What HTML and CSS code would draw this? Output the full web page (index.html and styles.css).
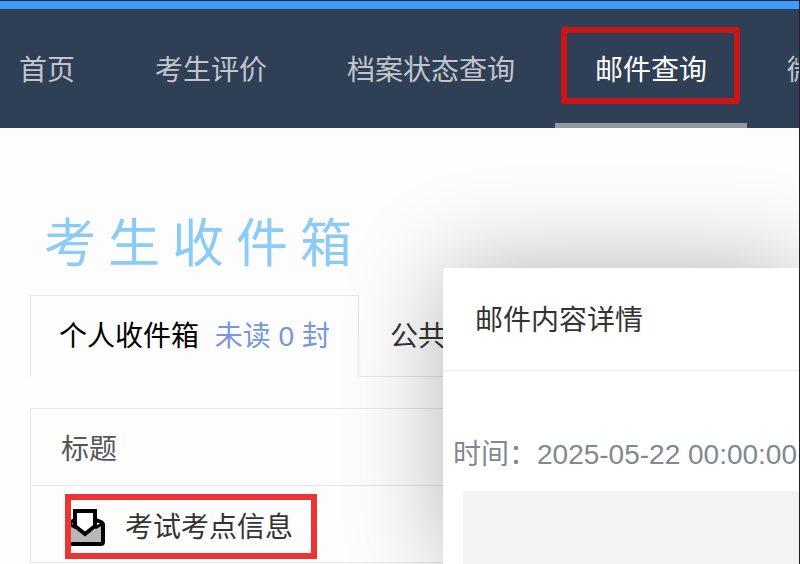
FILE: index.html
```html
<!DOCTYPE html>
<html lang="zh-CN">
<head>
    <meta charset="UTF-8">
    <meta name="viewport" content="width=device-width, initial-scale=1.0">
    <title>考生收件箱</title>
    <link rel="stylesheet" href="styles.css">
</head>
<body>
    <nav class="nav">
        <a class="nav-item" href="#">首页</a>
        <a class="nav-item" href="#">考生评价</a>
        <a class="nav-item" href="#">档案状态查询</a>
        <a class="nav-item active" href="#">邮件查询</a>
        <a class="nav-item" href="#">微信绑定</a>
    </nav>

    <main class="inbox">
        <h1 class="inbox-title">考生收件箱</h1>

        <div class="tabs">
            <button class="tab active" type="button">个人收件箱 <span class="unread">未读 0 封</span></button>
            <button class="tab" type="button">公共收件箱</button>
        </div>

        <table class="mail-table">
            <thead>
                <tr><th>标题</th></tr>
            </thead>
            <tbody>
                <tr>
                    <td>
                        <a class="mail-link" href="#">
                            <svg class="mail-icon" viewBox="0 0 41 41" aria-hidden="true">
                                <path d="M3 18 L20 28 L38 18 V37 H3 Z" fill="#b8b8b8"/>
                                <path d="M10 13 L4 16 V37 H36 Q38 37 38 35 V18 Q38 16 36 15 L31 13" fill="none" stroke="#000" stroke-width="4"/>
                                <path d="M10 4 H30 V19 L20 27 L10 19 Z" fill="#fff" stroke="#000" stroke-width="4"/>
                                <path d="M4 17 L11 21 M37 17 L30 21" stroke="#000" stroke-width="3"/>
                            </svg>
                            考试考点信息
                        </a>
                    </td>
                </tr>
            </tbody>
        </table>
    </main>

    <section class="dialog" role="dialog" aria-labelledby="dialog-title">
        <h2 class="dialog-title" id="dialog-title">邮件内容详情</h2>
        <p class="dialog-time">时间：2025-05-22 00:00:00</p>
        <div class="dialog-content"></div>
    </section>
</body>
</html>
```

FILE: styles.css
```css
* {
    box-sizing: border-box;
}
body {
    position: relative;
    min-height: 100vh;
    margin: 0;
    overflow: hidden;
    background-color: #fdfdfd;
    color: #333;
    font-family: "Liberation Sans", "Noto Sans CJK SC", sans-serif;
    font-size: 28px;
    line-height: 40px;
}
/* thin dark line down the right side of the window */
body::after {
    content: "";
    position: absolute;
    top: 0;
    right: 0;
    bottom: 0;
    z-index: 3;
    width: 1px;
    background-color: #222;
}
a {
    color: inherit;
    text-decoration: none;
}

/* top navigation */
.nav {
    display: flex;
    overflow: hidden;
    border-top: 1px solid #10294a;
    background-color: #2f4056;
    box-shadow: inset 0 8px #409bfa;
}
.nav-item {
    position: relative;
    flex: none;
    padding: 50px 40px 37px;
    color: #c1c6cc;
    white-space: nowrap;
}
.nav-item:first-child {
    padding-left: 19px;
}
.nav-item.active {
    border-bottom: 5px solid #9498a0;
    padding-bottom: 32px;
    color: #fff;
}
.nav-item.active::after {
    content: "";
    position: absolute;
    top: 26px;
    right: 7px;
    bottom: 19px;
    left: 6px;
    border: 6px solid #c91418;
    border-radius: 2px;
}

/* inbox */
.inbox {
    padding: 82px 0 0 30px;
}
.inbox-title {
    margin: 0 0 17px 14px;
    color: #8accf5;
    font-size: 52px;
    font-weight: normal;
    letter-spacing: 12px;
    line-height: 68px;
}
.tabs {
    display: flex;
    margin-bottom: 31px;
}
.tab {
    flex: none;
    padding: 21px 28px 19px;
    border: 1px solid transparent;
    border-bottom-color: #e6e6e6;
    background: none;
    color: #333;
    font: inherit;
    white-space: nowrap;
}
.tab:last-child {
    flex: 1 0 auto;
    padding-left: 30px;
    text-align: left;
}
.tab.active {
    border-color: #e6e6e6;
    border-bottom-color: transparent;
    color: #000;
}
.unread {
    margin-left: 8px;
    color: #7597dc;
}
.mail-table {
    width: 100%;
    border-collapse: collapse;
}
.mail-table th,
.mail-table td {
    height: 77px;
    padding: 6px 30px 0;
    border: 1px solid #e6e6e6;
    color: #555;
    font-weight: normal;
    text-align: left;
}
.mail-table td {
    color: #333;
}
.mail-link {
    position: relative;
    display: inline-flex;
    align-items: center;
    gap: 19px;
    padding-left: 4px;
    vertical-align: middle;
}
.mail-link::before {
    content: "";
    position: absolute;
    top: -13px;
    right: -24px;
    bottom: -11px;
    left: 4px;
    z-index: 1;
    border: 6px solid #ec3434;
}
.mail-icon {
    width: 41px;
    height: 41px;
}

/* mail detail dialog */
.dialog {
    position: absolute;
    top: 268px;
    right: 0;
    bottom: 0;
    left: 443px;
    z-index: 2;
    display: flex;
    flex-direction: column;
    border-radius: 4px 0 0 0;
    background-color: #fff;
    box-shadow: 2px 2px 100px rgba(0, 0, 0, 0.3);
}
.dialog-title {
    margin: 0;
    padding: 33px 32px 29px;
    border-bottom: 1px solid #eee;
    font-size: 28px;
    font-weight: normal;
}
.dialog-time {
    margin: 64px 0 16px 10px;
    color: #808890;
    white-space: nowrap;
}
.dialog-content {
    flex: 1;
    margin-left: 20px;
    background-color: #f3f3f3;
}
```
